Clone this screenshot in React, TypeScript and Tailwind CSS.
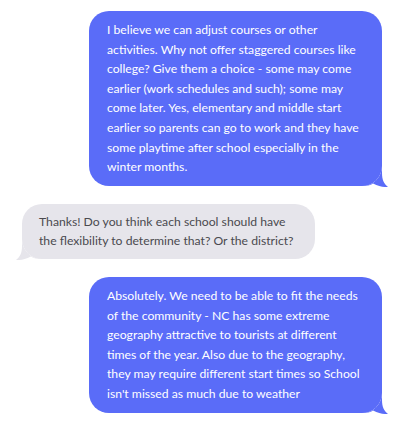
const messages = [
  {
    from: "me",
    text: "I believe we can adjust courses or other activities. Why not offer staggered courses like college? Give them a choice - some may come earlier (work schedules and such); some may come later. Yes, elementary and middle start earlier so parents can go to work and they have some playtime after school especially in the winter months.",
  },
  {
    from: "them",
    text: "Thanks! Do you think each school should have the flexibility to determine that? Or the district?",
  },
  {
    from: "me",
    text: "Absolutely. We need to be able to fit the needs of the community - NC has some extreme geography attractive to tourists at different times of the year. Also due to the geography, they may require different start times so School isn't missed as much due to weather",
  },
];

function Tail({ side, color }: { side: "left" | "right"; color: string }) {
  return (
    <svg
      width="26"
      height="26"
      viewBox="0 0 26 26"
      className={
        side === "right"
          ? "absolute -right-[6px] -bottom-[1px]"
          : "absolute -left-[6px] -bottom-[1px] -scale-x-100"
      }
    >
      <path
        d="M20 5 L20 12 C20 19 22 23 26 26 C22 26.3 17 25.5 11 22.5 C9 24 6 25 2 25 L0 25 A20 20 0 0 0 20 5 Z"
        fill={color}
      />
    </svg>
  );
}

export default function App() {
  return (
    <div
      className="w-[400px] h-[424px] bg-white pt-[11px] flex flex-col gap-[18px]"
      style={{ fontFamily: '"Lato", "Noto Sans", sans-serif' }}
    >
      {messages.map((m, i) =>
        m.from === "me" ? (
          <div key={i} className="flex justify-end pr-[18px]">
            <div className="relative w-[293px] rounded-[20px] bg-[#5a6cf8] px-[18px] py-[9px] text-[12.2px] leading-[19.6px] text-white">
              <Tail side="right" color="#5a6cf8" />
              <span className="relative">{m.text}</span>
            </div>
          </div>
        ) : (
          <div key={i} className="flex justify-start pl-[22px]">
            <div className="relative w-[293px] rounded-[20px] bg-[#e6e5eb] px-[17px] py-[8px] text-[12.2px] leading-[19.6px] text-[#4a4a4f]">
              <Tail side="left" color="#e6e5eb" />
              <span className="relative">{m.text}</span>
            </div>
          </div>
        )
      )}
    </div>
  );
}
